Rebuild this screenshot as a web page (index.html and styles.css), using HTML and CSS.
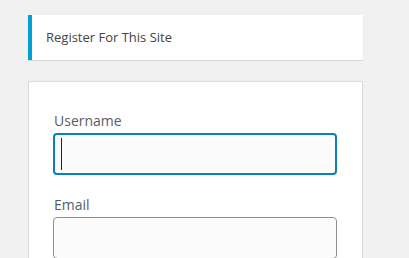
FILE: index.html
```html
<!DOCTYPE html>
<html>
<head>
    <title>Register</title>
    <meta name="viewport" content="width=device-width, initial-scale=1.0">
    <link rel="stylesheet" href="styles.css">
</head>
<body>
    <div class="login">
        <p class="message">Register For This Site</p>

        <form class="register-form">
            <label for="user_login">Username</label>
            <div class="field focused">
                <input type="text" id="user_login" class="input">
                <span class="caret"></span>
            </div>

            <label for="user_email">Email</label>
            <div class="field">
                <input type="email" id="user_email" class="input">
            </div>
        </form>
    </div>
</body>
</html>
```

FILE: styles.css
```css
/* 基础样式 */
body {
    margin: 0;
    padding: 0;
    background: #f1f1f1;
    font-family: "Open Sans", "Noto Sans", sans-serif;
    color: #444;
}

.login {
    width: 335px;
    padding: 15px 0 0 28px;
}

.message {
    margin: 0 0 21px;
    padding: 12px 12px 12px 14px;
    background: #fff;
    border-left: 4px solid #00a0d2;
    box-shadow: 0 1px 1px 0 rgba(0,0,0,0.1);
    font-size: 13px;
    line-height: 21px;
    color: #444;
}

.register-form {
    background: #fff;
    border: 1px solid #dcdcde;
    box-shadow: 0 1px 3px rgba(0,0,0,0.04);
    padding: 28px 24px 46px;
}

.register-form label {
    display: block;
    padding-left: 1px;
    font-size: 14px;
    line-height: 21px;
    color: #555d66;
    margin-bottom: 2px;
}

.field {
    position: relative;
    margin-bottom: 19px;
}

.input {
    display: block;
    box-sizing: border-box;
    width: 284px;
    height: 42px;
    margin: 0;
    padding: 3px 6px;
    font-size: 24px;
    background: #fbfbfb;
    border: 1px solid #8c8f94;
    border-radius: 4px;
    outline: none;
}

.focused .input {
    border: 2px solid #0a7fc2;
}

/* 光标 */
.caret {
    position: absolute;
    left: 8px;
    top: 5px;
    width: 1px;
    height: 32px;
    background: #222;
}
```
